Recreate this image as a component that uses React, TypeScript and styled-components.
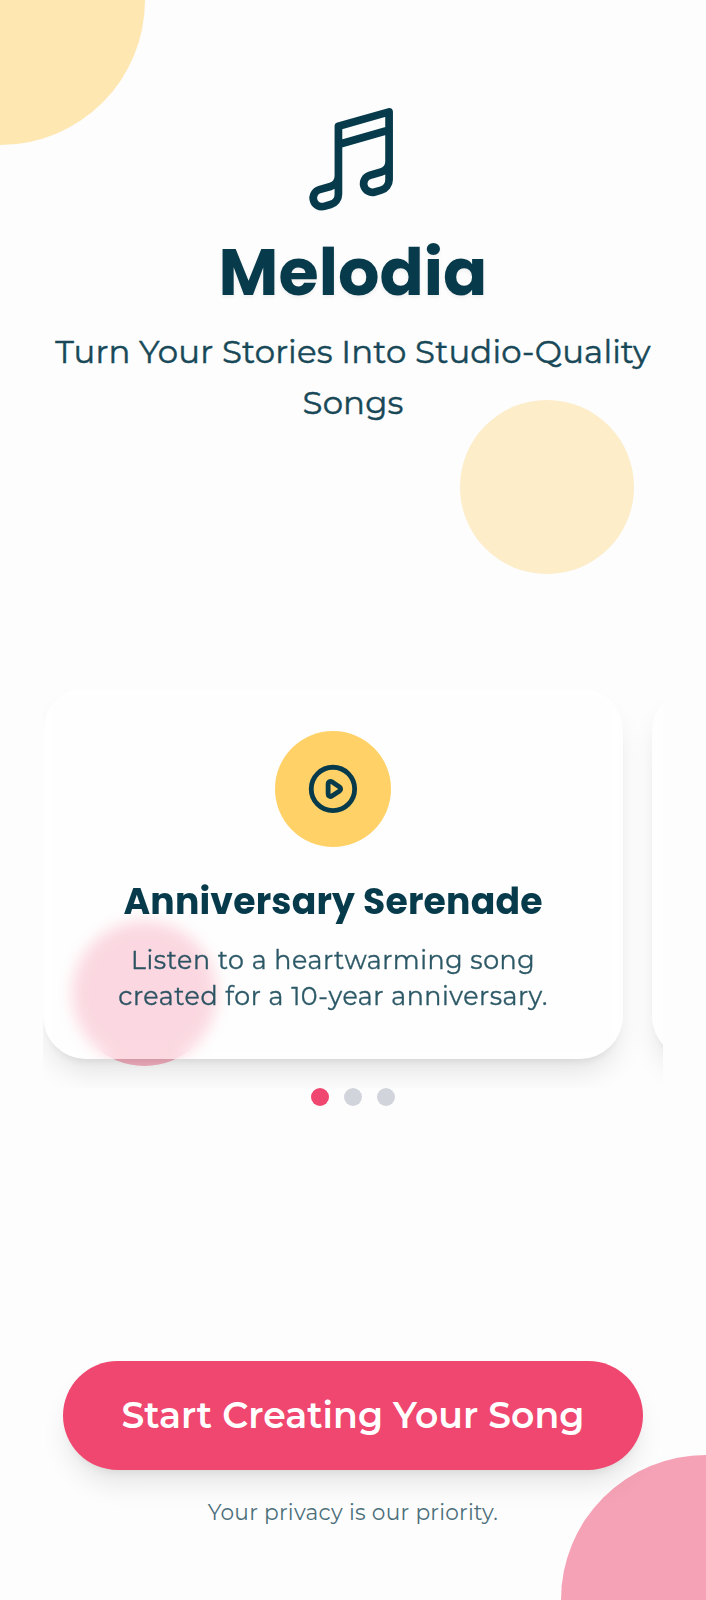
import React from "react";
import styled, { createGlobalStyle } from "styled-components";

const display = `Poppins, Inter, "Open Sans", sans-serif`;
const body = `Montserrat, Inter, "Open Sans", sans-serif`;

const GlobalStyle = createGlobalStyle`
  *, *::before, *::after { box-sizing: border-box; }
  body { margin: 0; background: #fdfdfd; color: #073b4c; font-family: ${body}; }
  h1, h2, p { margin: 0; }
`;

const Screen = styled.main`
  position: relative;
  overflow: hidden;
  width: 100%;
  height: 1600px;
  display: flex;
  flex-direction: column;
  align-items: center;
  background: #fdfdfd;
`;

const Blob = styled.span<{ $size: number; $color: string; $opacity: number; $x: number; $y: number }>`
  position: absolute;
  left: ${(p) => p.$x}px;
  top: ${(p) => p.$y}px;
  width: ${(p) => p.$size}px;
  height: ${(p) => p.$size}px;
  border-radius: 50%;
  background: ${(p) => p.$color};
  opacity: ${(p) => p.$opacity};
`;

const Header = styled.header`
  position: relative;
  display: flex;
  flex-direction: column;
  align-items: center;
  padding-top: 101.3px;
  height: 688px;
  text-align: center;
`;

const NoteIcon = styled.svg`
  flex: none;
  width: 115.8px;
  height: 115.8px;
`;

const Brand = styled.h1`
  margin-top: 15.7px;
  font: 700 65.2px/80px ${display};
  letter-spacing: 0.05px;
  white-space: nowrap;
  text-shadow: 0 2px 4px rgba(0, 0, 0, 0.06);
`;

const Tagline = styled.p`
  margin-top: 14.6px;
  width: 620px;
  font: 400 32.4px/50.7px ${body};
  letter-spacing: 0.15px;
  -webkit-text-stroke: 0.45px currentColor;
  opacity: 0.93;
`;

const Carousel = styled.section`
  position: relative;
  width: 619.2px;
  height: 400px;
  display: flex;
  gap: 29px;
  overflow: hidden;
`;

const Card = styled.article`
  flex: 0 0 579.3px;
  height: 370.7px;
  padding: 43.4px 43.4px 0;
  display: flex;
  flex-direction: column;
  align-items: center;
  text-align: center;
  border-radius: 43.4px;
  background: rgba(255, 255, 255, 0.5);
  backdrop-filter: blur(7.24px);
  box-shadow: 0 18.1px 27.2px -5.4px rgba(0, 0, 0, 0.1), 0 7.2px 10.9px -7.2px rgba(0, 0, 0, 0.1);
`;

const PlayBadge = styled.div`
  flex: none;
  width: 115.8px;
  height: 115.8px;
  display: grid;
  place-items: center;
  border-radius: 50%;
  background: #ffd166;

  svg { width: 57.9px; height: 57.9px; }
`;

const CardTitle = styled.h2`
  margin-top: 29px;
  font: 700 36.2px/51px ${display};
  letter-spacing: 0.18px;
  white-space: nowrap;
`;

const CardText = styled.p`
  margin-top: 14.5px;
  font: 400 25.3px/36.2px ${body};
  letter-spacing: 0.55px;
  -webkit-text-stroke: 0.35px currentColor;
  opacity: 0.85;
  white-space: nowrap;
`;

const Line = styled.span`
  display: block;
`;

const Dots = styled.div`
  position: relative;
  display: flex;
  gap: 14.5px;
`;

const Dot = styled.span<{ $active?: boolean }>`
  width: 18.1px;
  height: 18.1px;
  border-radius: 50%;
  background: ${(p) => (p.$active ? "#ef476f" : "#d1d5db")};
`;

const Footer = styled.footer`
  position: relative;
  margin-top: 255px;
  display: flex;
  flex-direction: column;
  align-items: center;
`;

const StartButton = styled.button`
  width: 579.3px;
  height: 108.6px;
  padding: 0;
  border: 0;
  border-radius: 55px;
  background: #ef476f;
  color: #fff;
  font: 600 36.2px/51px ${body};
  letter-spacing: 0.04px;
  white-space: nowrap;
  box-shadow: 0 18.1px 27.2px -5.4px rgba(0, 0, 0, 0.1), 0 7.2px 10.9px -7.2px rgba(0, 0, 0, 0.1);
`;

const Privacy = styled.p`
  margin-top: 28.7px;
  font: 400 21.7px/29px ${body};
  letter-spacing: 0.26px;
  opacity: 0.73;
`;

const MusicNote = () => (
  <NoteIcon viewBox="0 0 24 24" fill="none" stroke="#073b4c" strokeWidth="1.6" strokeLinecap="round" strokeLinejoin="round">
    <path d="m9 9 10.5-3m0 6.553v3.75a2.25 2.25 0 0 1-1.632 2.163l-1.32.377a1.803 1.803 0 1 1-.99-3.467l2.31-.66a2.25 2.25 0 0 0 1.632-2.163Zm0 0V2.25L9 5.25v10.303m0 0v3.75a2.25 2.25 0 0 1-1.632 2.163l-1.32.377a1.803 1.803 0 0 1-.99-3.467l2.31-.66A2.25 2.25 0 0 0 9 15.553Z" />
  </NoteIcon>
);

const PlayIcon = () => (
  <svg viewBox="0 0 24 24" fill="none" stroke="#073b4c" strokeWidth="2" strokeLinecap="round" strokeLinejoin="round">
    <path d="M14.752 11.168l-3.197-2.132A1 1 0 0010 9.87v4.263a1 1 0 001.555.832l3.197-2.132a1 1 0 000-1.664z" />
    <path d="M21 12a9 9 0 11-18 0 9 9 0 0118 0z" />
  </svg>
);

export default function App() {
  return (
    <>
      <GlobalStyle />
      <Screen>
        <Blob $size={289.6} $color="#ffd166" $opacity={0.5} $x={-144.8} $y={-144.8} />
        <Blob $size={289.6} $color="#ef476f" $opacity={0.5} $x={561.2} $y={1455.2} />
        <Blob $size={173.8} $color="#fbcf68" $opacity={0.35} $x={459.8} $y={400} />
        <Blob $size={144.8} $color="#ef476f" $opacity={0.42} $x={72.4} $y={921.2} />

        <Header>
          <MusicNote />
          <Brand>Melodia</Brand>
          <Tagline>
            <Line>Turn Your Stories Into Studio-Quality</Line>
            <Line>Songs</Line>
          </Tagline>
        </Header>

        <Carousel>
          <Card>
            <PlayBadge>
              <PlayIcon />
            </PlayBadge>
            <CardTitle>Anniversary Serenade</CardTitle>
            <CardText>
              <Line>Listen to a heartwarming song</Line>
              <Line>created for a 10-year anniversary.</Line>
            </CardText>
          </Card>
          <Card />
        </Carousel>

        <Dots>
          <Dot $active />
          <Dot />
          <Dot />
        </Dots>

        <Footer>
          <StartButton>Start Creating Your Song</StartButton>
          <Privacy>Your privacy is our priority.</Privacy>
        </Footer>
      </Screen>
    </>
  );
}
